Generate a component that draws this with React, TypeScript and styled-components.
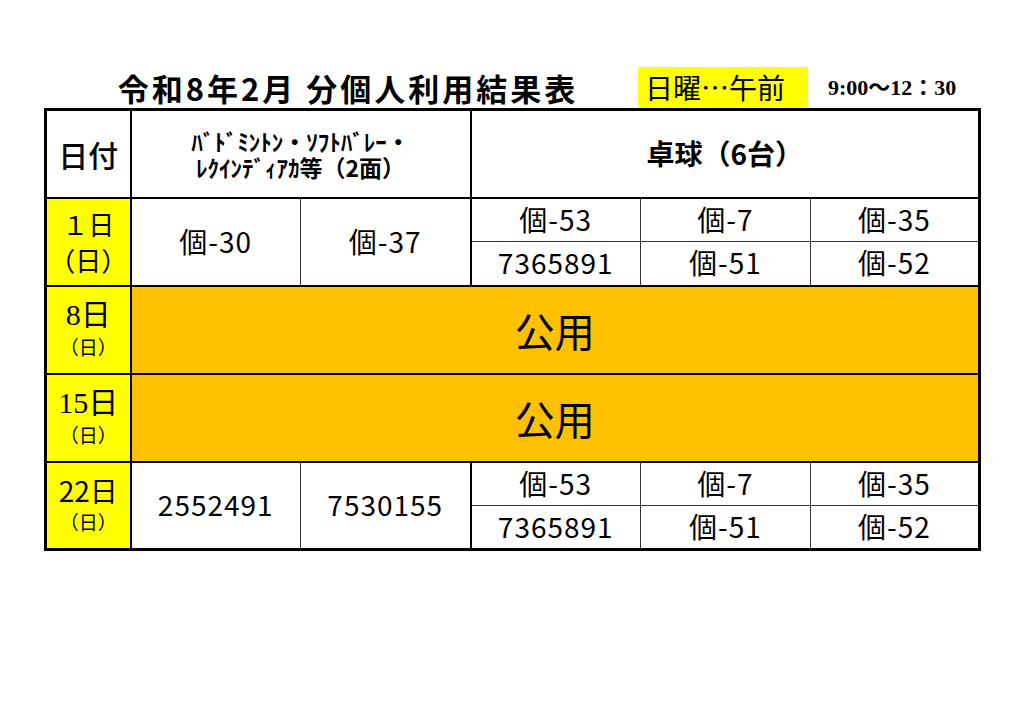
import styled, { createGlobalStyle } from 'styled-components';

const GlobalStyle = createGlobalStyle`
  html, body {
    margin: 0;
    padding: 0;
    background: #fff;
  }
  body {
    font-family: "Noto Sans CJK JP", "Noto Sans", sans-serif;
    color: #000;
  }
`;

const Page = styled.div`
  width: 1024px;
  height: 724px;
  padding: 67px 0 0 44px;
  box-sizing: border-box;
`;

const Header = styled.div`
  display: flex;
  align-items: center;
  width: 934px;
  height: 41px;
`;

const Title = styled.h1`
  margin: 0;
  width: 594px;
  padding-left: 14px;
  box-sizing: border-box;
  text-align: center;
  font-size: 31px;
  font-weight: 700;
  letter-spacing: 3px;
  line-height: 41px;
  white-space: nowrap;
`;

const Session = styled.div`
  width: 170px;
  height: 41px;
  padding-left: 7px;
  box-sizing: border-box;
  background: #ffff00;
  font-size: 28px;
  line-height: 41px;
  white-space: nowrap;
`;

const Time = styled.div`
  margin-left: 20px;
  font-family: "Liberation Serif", "Noto Sans CJK JP", serif;
  font-size: 22px;
  font-weight: 700;
  line-height: 41px;
  white-space: nowrap;
`;

const Table = styled.table`
  border-collapse: collapse;
  table-layout: fixed;
  width: 934px;
  border: 3px solid #000;
`;

const Col = styled.col<{ $w: number; $thick?: boolean }>`
  width: ${({ $w }) => $w}px;
  border-right: ${({ $thick }) => ($thick ? '2px solid #000' : 'none')};
`;

const Head = styled.thead`
  border-bottom: 2px solid #000;
`;

const Group = styled.tbody`
  border-top: 2px solid #000;
`;

const Row = styled.tr<{ $h: number }>`
  height: ${({ $h }) => $h}px;
`;

const HeadCell = styled.th<{ $size: number; $weight?: number; $lh?: number }>`
  border: 1px solid #333;
  padding: 0;
  text-align: center;
  vertical-align: middle;
  font-size: ${({ $size }) => $size}px;
  font-weight: ${({ $weight }) => $weight ?? 700};
  line-height: ${({ $lh }) => ($lh ? `${$lh}px` : 1.2)};
  white-space: nowrap;
`;

const Cell = styled.td`
  border: 1px solid #333;
  padding: 0;
  text-align: center;
  vertical-align: middle;
  font-size: 28px;
  letter-spacing: 1px;
  line-height: 1.2;
  white-space: nowrap;
`;

const DateCell = styled.td`
  border: 1px solid #333;
  padding: 0;
  background: #ffff00;
  text-align: center;
  vertical-align: middle;
`;

const DateLine = styled.span<{ $size: number; $lh: number; $serif?: boolean }>`
  display: block;
  font-family: ${({ $serif }) =>
    $serif ? '"Liberation Serif", "Noto Sans CJK JP", serif' : '"Noto Sans CJK JP", sans-serif'};
  font-size: ${({ $size }) => $size}px;
  line-height: ${({ $lh }) => $lh}px;
  white-space: nowrap;
`;

const PublicCell = styled.td`
  border: 1px solid #333;
  padding: 0;
  background: #ffc000;
  text-align: center;
  vertical-align: middle;
  font-size: 40px;
  line-height: 1.2;
`;

function PublicGroup({ date }: { date: React.ReactNode }) {
  return (
    <Group>
      <Row $h={88}>
        <DateCell>{date}</DateCell>
        <PublicCell colSpan={5}>公用</PublicCell>
      </Row>
    </Group>
  );
}

export default function App() {
  return (
    <Page>
      <GlobalStyle />
      <Header>
        <Title>令和8年2月 分個人利用結果表</Title>
        <Session>日曜…午前</Session>
        <Time>9:00～12：30</Time>
      </Header>
      <Table>
        <colgroup>
          <Col $w={85} $thick />
          <Col $w={170} />
          <Col $w={170} $thick />
          <Col $w={170} />
          <Col $w={170} />
          <Col $w={169} />
        </colgroup>
        <Head>
          <Row $h={88}>
            <HeadCell $size={30} $weight={500}>日付</HeadCell>
            <HeadCell $size={23} $lh={26} colSpan={2}>
              ﾊﾞﾄﾞﾐﾝﾄﾝ・ｿﾌﾄﾊﾞﾚｰ・
              <br />
              ﾚｸｲﾝﾃﾞｨｱｶ等（2面）
            </HeadCell>
            <HeadCell $size={28} colSpan={3}>卓球（6台）</HeadCell>
          </Row>
        </Head>
        <Group>
          <Row $h={44}>
            <DateCell rowSpan={2}>
              <DateLine $size={26} $lh={36}>１日</DateLine>
              <DateLine $size={26} $lh={36}>（日）</DateLine>
            </DateCell>
            <Cell rowSpan={2}>個-30</Cell>
            <Cell rowSpan={2}>個-37</Cell>
            <Cell>個-53</Cell>
            <Cell>個-7</Cell>
            <Cell>個-35</Cell>
          </Row>
          <Row $h={44}>
            <Cell>7365891</Cell>
            <Cell>個-51</Cell>
            <Cell>個-52</Cell>
          </Row>
        </Group>
        <PublicGroup
          date={
            <>
              <DateLine $size={30} $lh={34} $serif>8日</DateLine>
              <DateLine $size={19} $lh={30}>（日）</DateLine>
            </>
          }
        />
        <PublicGroup
          date={
            <>
              <DateLine $size={30} $lh={34} $serif>15日</DateLine>
              <DateLine $size={19} $lh={30}>（日）</DateLine>
            </>
          }
        />
        <Group>
          <Row $h={44}>
            <DateCell rowSpan={2}>
              <DateLine $size={28} $lh={34}>22日</DateLine>
              <DateLine $size={19} $lh={30}>（日）</DateLine>
            </DateCell>
            <Cell rowSpan={2}>2552491</Cell>
            <Cell rowSpan={2}>7530155</Cell>
            <Cell>個-53</Cell>
            <Cell>個-7</Cell>
            <Cell>個-35</Cell>
          </Row>
          <Row $h={44}>
            <Cell>7365891</Cell>
            <Cell>個-51</Cell>
            <Cell>個-52</Cell>
          </Row>
        </Group>
      </Table>
    </Page>
  );
}
